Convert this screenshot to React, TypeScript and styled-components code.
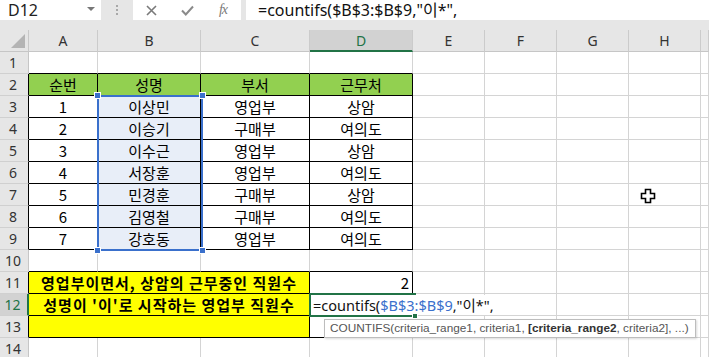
import React from 'react';
import styled, { createGlobalStyle, css } from 'styled-components';

const UI = `"Noto Sans", "Noto Sans CJK KR", sans-serif`;
const KR = `"Noto Sans CJK KR", "Noto Sans", sans-serif`;

const GRID = '#d4d4d4';
const BLACK = '#000';
const GREEN = '#217346';
const REF = '#3a70cc';

const GlobalStyle = createGlobalStyle`
  html, body { margin: 0; padding: 0; background: #fff; overflow: hidden; }
  body { font-family: ${UI}; }
  * { box-sizing: border-box; }
`;

const formulaFont = css`
  font-family: ${UI};
  font-weight: 400;
  line-height: 20px;
  white-space: nowrap;
  color: #111;
`;

const Page = styled.div`
  width: 709px;
  height: 357px;
  overflow: hidden;
  position: relative;
  background: #fff;
`;

const FormulaBar = styled.div`
  display: flex;
  align-items: flex-start;
  height: 30px;
  background: #e6e6e6;
`;

const NameBox = styled.div`
  width: 101px;
  height: 20px;
  background: #fff;
  display: flex;
  align-items: center;
  justify-content: space-between;
  padding: 0 6px 0 8px;
  font: 16px ${UI};
  color: #222;
`;

const Caret = styled.span`
  width: 0;
  height: 0;
  border-left: 4px solid transparent;
  border-right: 4px solid transparent;
  border-top: 4px solid #777;
  margin-bottom: 3px;
`;

const Grip = styled.div`
  width: 32px;
  height: 20px;
  display: flex;
  flex-direction: column;
  align-items: center;
  justify-content: center;
  gap: 2px;
`;

const GripDot = styled.span`
  width: 2px;
  height: 2px;
  background: #a8a8a8;
`;

const ButtonBox = styled.div`
  width: 108px;
  height: 20px;
  background: #fff;
  display: flex;
`;

const IconSlot = styled.div`
  width: 36px;
  height: 20px;
  display: flex;
  align-items: center;
  justify-content: center;
  color: #7a7a7a;
`;

const Fx = styled.span`
  font: italic 14px "Liberation Serif", serif;
  color: #7a7a7a;
  letter-spacing: -1px;
`;

const FormulaInput = styled.div`
  flex: 1;
  margin-left: 5px;
  height: 20px;
  background: #fff;
  padding-left: 12px;
  font-size: 16px;
  ${formulaFont}
`;

const Sheet = styled.div`
  position: relative;
  display: grid;
  grid-template-columns: 29px 69px 103px 109px 103px 72px 72px 72px 72px 1fr;
  grid-auto-rows: 22px;
`;

const Corner = styled.div`
  background: #e6e6e6;
  border-right: 1px solid #c8c8c8;
  border-bottom: 1px solid #c6c6c6;
  position: relative;
  &::after {
    content: '';
    position: absolute;
    right: 3px;
    bottom: 3px;
    width: 0;
    height: 0;
    border-left: 14px solid transparent;
    border-bottom: 14px solid #b4b4b4;
  }
`;

const ColHead = styled.div<{ $active?: boolean }>`
  background: ${(p) => (p.$active ? '#d2d2d2' : '#e6e6e6')};
  color: ${(p) => (p.$active ? GREEN : '#333')};
  border-right: 1px solid #cbcbcb;
  border-bottom: ${(p) => (p.$active ? `2px solid ${GREEN}` : '1px solid #c6c6c6')};
  font: 14px ${UI};
  display: flex;
  align-items: center;
  justify-content: center;
  padding-top: ${(p) => (p.$active ? '1px' : '0')};
`;

const RowHead = styled.div<{ $active?: boolean; $edge?: boolean }>`
  background: ${(p) => (p.$active ? '#d2d2d2' : '#e6e6e6')};
  color: ${(p) => (p.$active ? GREEN : '#333')};
  border-right: ${(p) => (p.$active ? `2px solid ${GREEN}` : `1px solid ${p.$edge ? BLACK : '#c6c6c6'}`)};
  border-bottom: 1px solid #d0d0d0;
  font: 14px ${UI};
  display: flex;
  align-items: center;
  justify-content: center;
  padding-right: 2px;
`;

const Cell = styled.div<{
  $r?: string;
  $b?: string;
  $bg?: string;
  $align?: 'left' | 'center' | 'right';
  $bold?: boolean;
  $span?: number;
}>`
  border-right: 1px solid ${(p) => p.$r || GRID};
  border-bottom: 1px solid ${(p) => p.$b || GRID};
  background: ${(p) => p.$bg || '#fff'};
  font-family: ${KR};
  font-weight: ${(p) => (p.$bold ? 700 : 400)};
  font-size: 15px;
  letter-spacing: ${(p) => (p.$bold ? '1px' : '0')};
  color: #000;
  line-height: 21px;
  text-align: ${(p) => p.$align || 'center'};
  padding: 0 3px;
  white-space: nowrap;
  ${(p) =>
    p.$span &&
    css`
      grid-column: span ${p.$span};
    `}
`;

const SelectionBox = styled.div`
  position: absolute;
  left: 97px;
  top: 65px;
  width: 106px;
  height: 156px;
  border: 2px solid ${REF};
  pointer-events: none;
`;

const Handle = styled.span<{ $x: 'l' | 'r'; $y: 't' | 'b' }>`
  position: absolute;
  width: 7px;
  height: 7px;
  background: ${REF};
  border: 1px solid #fff;
  ${(p) => (p.$x === 'l' ? 'left: -5px;' : 'right: -5px;')}
  ${(p) => (p.$y === 't' ? 'top: -5px;' : 'bottom: -5px;')}
`;

const EditBox = styled.div`
  position: absolute;
  left: 309px;
  top: 263px;
  width: 107px;
  height: 24px;
  border: 2px solid ${GREEN};
  border-right: none;
  pointer-events: none;
`;

const FillHandle = styled.span`
  position: absolute;
  left: 412px;
  top: 283px;
  width: 6px;
  height: 6px;
  background: ${GREEN};
  border: 1px solid #fff;
`;

const EditText = styled.div`
  position: absolute;
  left: 311px;
  top: 265px;
  height: 20px;
  padding: 0 4px 0 2px;
  background: #fff;
  font-size: 14.5px;
  ${formulaFont}
`;

const RefText = styled.span`
  color: ${REF};
`;

const Tooltip = styled.div`
  position: absolute;
  left: 324px;
  top: 289px;
  width: 372px;
  height: 19px;
  border: 1px solid #bdbdbd;
  background: #fff;
  box-shadow: 1px 1px 2px rgba(0, 0, 0, 0.15);
  padding-left: 5px;
  font-family: "Liberation Sans", Arial, sans-serif;
  font-size: 11.8px;
  line-height: 17px;
  color: #555;
  white-space: nowrap;
`;

const TipBold = styled.b`
  color: #333;
  font-weight: 700;
`;

const Cursor = styled.svg`
  position: absolute;
  left: 640px;
  top: 158px;
`;

const cols = ['A', 'B', 'C', 'D', 'E', 'F', 'G', 'H', ''];

const people: [string, string, string, string][] = [
  ['1', '이상민', '영업부', '상암'],
  ['2', '이승기', '구매부', '여의도'],
  ['3', '이수근', '영업부', '상암'],
  ['4', '서장훈', '영업부', '여의도'],
  ['5', '민경훈', '구매부', '상암'],
  ['6', '김영철', '구매부', '여의도'],
  ['7', '강호동', '영업부', '여의도'],
];

const blanks = (n: number, key: string) =>
  Array.from({ length: n }, (_, i) => <Cell key={`${key}-${i}`} />);

export default function App() {
  const rows: React.ReactNode[] = [];

  rows.push(<RowHead key="h1">1</RowHead>);
  for (let i = 0; i < 4; i++) rows.push(<Cell key={`r1-${i}`} $b={BLACK} />);
  rows.push(...blanks(5, 'r1b'));

  rows.push(
    <RowHead key="h2" $edge>
      2
    </RowHead>
  );
  ['순번', '성명', '부서', '근무처'].forEach((t, i) =>
    rows.push(
      <Cell key={`r2-${i}`} $r={BLACK} $b={BLACK} $bg="#92d050">
        {t}
      </Cell>
    )
  );
  rows.push(...blanks(5, 'r2b'));

  people.forEach((p, ri) => {
    const n = ri + 3;
    rows.push(
      <RowHead key={`h${n}`} $edge>
        {n}
      </RowHead>
    );
    p.forEach((t, ci) =>
      rows.push(
        <Cell key={`r${n}-${ci}`} $r={BLACK} $b={BLACK} $bg={ci === 1 ? '#e8eef8' : '#fff'}>
          {t}
        </Cell>
      )
    );
    rows.push(...blanks(5, `r${n}b`));
  });

  rows.push(<RowHead key="h10">10</RowHead>);
  for (let i = 0; i < 4; i++) rows.push(<Cell key={`r10-${i}`} $b={BLACK} />);
  rows.push(...blanks(5, 'r10b'));

  const labels = ['영업부이면서, 상암의 근무중인 직원수', "성명이 '이'로 시작하는 영업부 직원수", ''];
  labels.forEach((t, i) => {
    const n = 11 + i;
    rows.push(
      <RowHead key={`h${n}`} $edge $active={n === 12}>
        {n}
      </RowHead>
    );
    rows.push(
      <Cell key={`r${n}-a`} $span={3} $r={BLACK} $b={BLACK} $bg="#ffff00" $bold>
        {t}
      </Cell>
    );
    rows.push(
      <Cell key={`r${n}-d`} $r={BLACK} $b={BLACK} $align="right">
        {n === 11 ? '2' : ''}
      </Cell>
    );
    rows.push(...blanks(5, `r${n}b`));
  });

  rows.push(<RowHead key="h14">14</RowHead>);
  rows.push(...blanks(9, 'r14b'));

  return (
    <Page>
      <GlobalStyle />
      <FormulaBar>
        <NameBox>
          D12
          <Caret />
        </NameBox>
        <Grip>
          <GripDot />
          <GripDot />
          <GripDot />
        </Grip>
        <ButtonBox>
          <IconSlot>
            <svg width="11" height="11" viewBox="0 0 11 11">
              <path d="M1 1 L10 10 M10 1 L1 10" stroke="#7a7a7a" strokeWidth="1.6" fill="none" />
            </svg>
          </IconSlot>
          <IconSlot>
            <svg width="13" height="11" viewBox="0 0 13 11">
              <path d="M1 5.5 L4.8 9.5 L12 1.5" stroke="#8a8a8a" strokeWidth="2" fill="none" />
            </svg>
          </IconSlot>
          <IconSlot>
            <Fx>fx</Fx>
          </IconSlot>
        </ButtonBox>
        <FormulaInput>=countifs($B$3:$B$9,"이*",</FormulaInput>
      </FormulaBar>

      <Sheet>
        <Corner />
        {cols.map((c, i) => (
          <ColHead key={`c${i}`} $active={c === 'D'}>
            {c}
          </ColHead>
        ))}
        {rows}

        <SelectionBox>
          <Handle $x="l" $y="t" />
          <Handle $x="r" $y="t" />
          <Handle $x="l" $y="b" />
          <Handle $x="r" $y="b" />
        </SelectionBox>

        <EditBox />
        <EditText>
          =countifs(<RefText>$B$3:$B$9</RefText>,"이*",
        </EditText>
        <FillHandle />

        <Tooltip>
          COUNTIFS(criteria_range1, criteria1, <TipBold>[criteria_range2</TipBold>, criteria2], ...)
        </Tooltip>

        <Cursor width="16" height="16" viewBox="0 0 16 16">
          <path
            d="M5.5 1.5 H10.5 V5.5 H14.5 V10.5 H10.5 V14.5 H5.5 V10.5 H1.5 V5.5 H5.5 Z"
            fill="#fff"
            stroke="#000"
            strokeWidth="1.6"
          />
        </Cursor>
      </Sheet>
    </Page>
  );
}
